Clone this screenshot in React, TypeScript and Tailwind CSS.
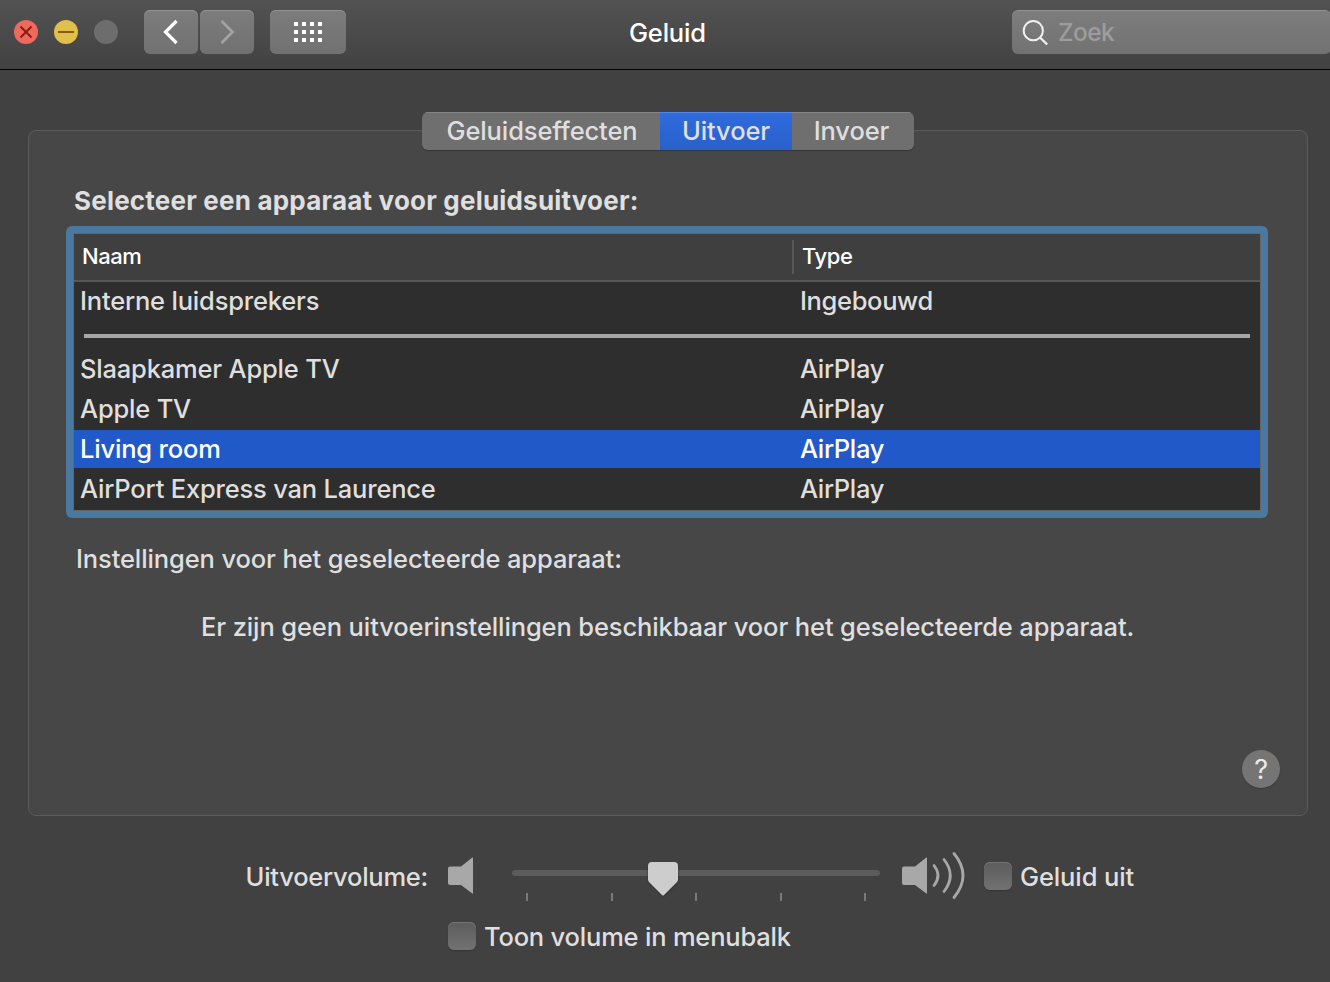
import type { ReactNode } from "react";

type Device = {
  name: string;
  type: string;
};

const builtIn: Device = { name: "Interne luidsprekers", type: "Ingebouwd" };

const airplayDevices: Device[] = [
  { name: "Slaapkamer Apple TV", type: "AirPlay" },
  { name: "Apple TV", type: "AirPlay" },
  { name: "Living room", type: "AirPlay" },
  { name: "AirPort Express van Laurence", type: "AirPlay" },
];

const selectedDevice = "Living room";
const volume = 151 / 368;

export default function App() {
  return (
    <div className="flex h-[982px] w-[1330px] flex-col overflow-hidden bg-[#414141] font-['Inter',sans-serif] text-[25.5px] leading-[38px] font-[450] tracking-[-0.12px] text-[#dfdfdf]">
      <Toolbar />
      <main className="flex flex-col px-7 pt-[42px]">
        <Tabs />
        <OutputPanel />
        <VolumeControls />
      </main>
    </div>
  );
}

function Toolbar() {
  return (
    <header className="flex h-[70px] shrink-0 items-start border-b border-black bg-linear-to-b from-[#525252] to-[#424242] pt-[10px] pl-[14px]">
      <div className="flex h-11 w-[130px] shrink-0 items-center gap-4">
        <svg width="24" height="24" viewBox="0 0 24 24">
          <circle cx="12" cy="12" r="12" fill="#ee6a5f" />
          <path d="M6.5 6.5l11 11M17.5 6.5l-11 11" stroke="#8c1a10" strokeWidth="2" />
        </svg>
        <svg width="24" height="24" viewBox="0 0 24 24">
          <circle cx="12" cy="12" r="12" fill="#e0c04c" />
          <path d="M4 12h16" stroke="#8a5a12" strokeWidth="2" />
        </svg>
        <span className="h-6 w-6 rounded-full bg-[#6d6d6d]" />
      </div>
      <div className="flex w-[485px] shrink-0 gap-[2px]">
        <ToolbarButton className="w-[54px]">
          <svg width="54" height="44" viewBox="0 0 54 44" fill="none">
            <path d="M32.500 11L21.500 22l11 11" stroke="#fff" strokeWidth="3.200" />
          </svg>
        </ToolbarButton>
        <ToolbarButton className="w-[54px]">
          <svg width="54" height="44" viewBox="0 0 54 44" fill="none">
            <path d="M21.500 11l11 11-11 11" stroke="#a3a3a3" strokeWidth="2.800" />
          </svg>
        </ToolbarButton>
        <ToolbarButton className="ml-[14px] w-[76px]">
          <span className="grid grid-cols-4 gap-1">
            {Array.from({ length: 12 }, (_, i) => (
              <span key={i} className="h-1 w-1 bg-white" />
            ))}
          </span>
        </ToolbarButton>
      </div>
      <h1 className="w-[383px] shrink-0 pt-[4px] tracking-[-0.2px] text-white">Geluid</h1>
      <div className="flex h-11 w-[319px] shrink-0 items-center rounded-md border-t border-[#929292] bg-linear-to-b from-[#7d7d7d] to-[#727272] pl-[10px] text-[#9d9d9d]">
        <svg width="27" height="28" viewBox="0 0 27 28" fill="none" stroke="#f0f0f0">
          <circle cx="11.300" cy="11.700" r="9.6" strokeWidth="2" />
          <path d="M18 18.500l7.200 7" strokeWidth="2.4" />
        </svg>
        <span className="mb-[2px] ml-[9px] text-[24.5px] tracking-[-0.6px]">Zoek</span>
      </div>
    </header>
  );
}

function ToolbarButton({ className, children }: { className: string; children: ReactNode }) {
  return (
    <button
      className={`flex h-11 items-center justify-center rounded-md bg-linear-to-b from-[#7c7c7c] to-[#717171] shadow-[inset_0_1px_0_#939393] ${className}`}
    >
      {children}
    </button>
  );
}

function Tabs() {
  return (
    <div className="z-10 ml-[394px] flex h-[38px] w-[492px] overflow-hidden rounded-md bg-[#6f6f6f] shadow-[0_1px_1px_#353535]">
      <button className="w-[238px] pl-[2px] shadow-[inset_0_1px_0_#868686]">Geluidseffecten</button>
      <button className="w-[132px] bg-linear-to-b from-[#306cde] to-[#2960cb] shadow-[inset_0_1px_0_#5585e2]">
        Uitvoer
      </button>
      <button className="w-[122px] pr-[3px] shadow-[inset_0_1px_0_#868686]">Invoer</button>
    </div>
  );
}

function OutputPanel() {
  return (
    <section className="-mt-5 flex h-[686px] w-[1280px] flex-col rounded-lg border border-[#5b5b5b] bg-[#474747] pl-[37px]">
      <h2 className="mt-[51px] ml-[8px] text-[26px] font-bold tracking-[0.2px]">
        Selecteer een apparaat voor geluidsuitvoer:
      </h2>
      <DeviceTable />
      <p className="mt-[22px] ml-[10px]">Instellingen voor het geselecteerde apparaat:</p>
      <p className="mt-[30px] ml-[135px] whitespace-nowrap">
        Er zijn geen uitvoerinstellingen beschikbaar voor het geselecteerde apparaat.
      </p>
      <button className="mt-[104px] mr-[27px] h-[38px] w-[38px] self-end rounded-full bg-[#757575] pt-px text-[27px] font-normal text-[#ebebeb] shadow-[0_1px_1px_#3a3a3a]">
        ?
      </button>
    </section>
  );
}

function DeviceTable() {
  return (
    <div className="mt-[6px] h-[292px] w-[1202px] shrink-0 rounded-md bg-[#4a789f] p-[7px]">
      <div className="flex h-[278px] flex-col border border-[#626769] bg-[#2e2e2e]">
        <div className="flex h-12 shrink-0 items-center border-b-2 border-[#575757] bg-[#3f3f3f] text-[22px] font-medium tracking-[-0.45px] text-white">
          <span className="w-[718px] pb-[2px] pl-2">Naam</span>
          <span className="h-[34px] w-[2px] bg-[#575757]" />
          <span className="pb-[2px] pl-[8px]">Type</span>
        </div>
        <DeviceRow device={builtIn} />
        <hr className="mt-[14px] mr-[10px] mb-3 ml-[10px] h-1 shrink-0 border-0 bg-[#a8a8a8]" />
        <div className="flex flex-col gap-[2px]">
          {airplayDevices.map((device) => (
            <DeviceRow key={device.name} device={device} selected={device.name === selectedDevice} />
          ))}
        </div>
      </div>
    </div>
  );
}

function DeviceRow({ device, selected = false }: { device: Device; selected?: boolean }) {
  return (
    <div className={`flex h-[38px] shrink-0 pl-[6px] tracking-[-0.19px] ${selected ? "bg-[#2159c8] text-white" : ""}`}>
      <span className="w-[720px]">{device.name}</span>
      <span className="tracking-[-0.35px]">{device.type}</span>
    </div>
  );
}

function VolumeControls() {
  return (
    <div className="flex flex-col pt-[36px]">
      <div className="flex h-12">
        <span className="mt-[6px] ml-[217px] w-[203px] pl-[0.5px] tracking-[-0.25px]">Uitvoervolume:</span>
        <svg className="mt-[5px]" width="26" height="38" viewBox="0 0 26 38">
          <Speaker />
        </svg>
        <VolumeSlider />
        <svg className="ml-[22px]" width="66" height="48" viewBox="0 0 66 48">
          <g transform="translate(0 5)">
            <Speaker />
          </g>
          <g fill="none" stroke="#a8a8a8" strokeWidth="2.8" strokeLinecap="round">
            <path d="M32 13.500q8 10 0 20" />
            <path d="M42 7.500q12.500 16 0 32" />
            <path d="M52 1.500q18 22 0 44" />
          </g>
        </svg>
        <label className="mt-[6px] ml-[16px] flex gap-2">
          <Checkbox />
          Geluid uit
        </label>
      </div>
      <label className="mt-[18px] ml-[420px] flex gap-2 tracking-[-0.2px]">
        <Checkbox />
        Toon volume in menubalk
      </label>
    </div>
  );
}

function Speaker() {
  return <path d="M2 9.500H13L24 .8q1-.8 1 .3v35q0 1-1 .2L13 28H2q-2 0-2-2V11.500q0-2 2-2z" fill="#a8a8a8" />;
}

function VolumeSlider() {
  return (
    <div className="relative ml-[38px] w-[368px] pt-[18px]">
      <div className="h-[6px] rounded-full bg-[#5c5c5c]" />
      <div className="mt-[17px] flex justify-between pr-[14px] pl-[14px]">
        {[0, 1, 2, 3, 4].map((i) => (
          <span key={i} className="h-2 w-[2px] bg-[#7a7a7a]" />
        ))}
      </div>
      <svg
        className="absolute top-[10px] -translate-x-1/2 drop-shadow-[0_1px_1px_#333]"
        style={{ left: `${volume * 100}%` }}
        width="30"
        height="34"
        viewBox="0 0 30 34"
      >
        <path d="M4 0H26Q30 0 30 4V17.500Q30 19 28.800 20.200L16 33Q15 34 14 33L1.200 20.200Q0 19 0 17.500V4Q0 0 4 0z" fill="#cdcdcd" />
      </svg>
    </div>
  );
}

function Checkbox() {
  return (
    <span className="mt-[4px] h-7 w-7 shrink-0 rounded-md bg-linear-to-b from-[#5c5c5c] to-[#727272] shadow-[inset_0_1px_0_#767676,0_1px_1px_#353535]" />
  );
}
